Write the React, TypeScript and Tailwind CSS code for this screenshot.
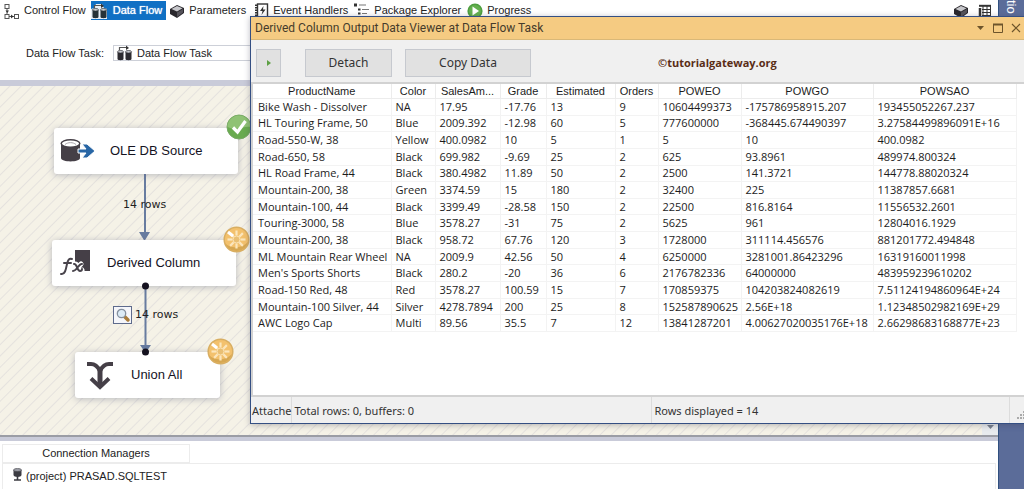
import type { ReactNode } from 'react';

type Row = string[];

const columns: { label: string; width: string }[] = [
  { label: 'ProductName', width: 'w-[138px]' },
  { label: 'Color', width: 'w-[44px]' },
  { label: 'SalesAm...', width: 'w-[65px]' },
  { label: 'Grade', width: 'w-[46px]' },
  { label: 'Estimated', width: 'w-[69px]' },
  { label: 'Orders', width: 'w-[43px]' },
  { label: 'POWEO', width: 'w-[83px]' },
  { label: 'POWGO', width: 'w-[132px]' },
  { label: 'POWSAO', width: 'w-[143px]' },
];

const rows: Row[] = [
  ['Bike Wash - Dissolver', 'NA', '17.95', '-17.76', '13', '9', '10604499373', '-175786958915.207', '193455052267.237'],
  ['HL Touring Frame, 50', 'Blue', '2009.392', '-12.98', '60', '5', '777600000', '-368445.674490397', '3.27584499896091E+16'],
  ['Road-550-W, 38', 'Yellow', '400.0982', '10', '5', '1', '5', '10', '400.0982'],
  ['Road-650, 58', 'Black', '699.982', '-9.69', '25', '2', '625', '93.8961', '489974.800324'],
  ['HL Road Frame, 44', 'Black', '380.4982', '11.89', '50', '2', '2500', '141.3721', '144778.88020324'],
  ['Mountain-200, 38', 'Green', '3374.59', '15', '180', '2', '32400', '225', '11387857.6681'],
  ['Mountain-100, 44', 'Black', '3399.49', '-28.58', '150', '2', '22500', '816.8164', '11556532.2601'],
  ['Touring-3000, 58', 'Blue', '3578.27', '-31', '75', '2', '5625', '961', '12804016.1929'],
  ['Mountain-200, 38', 'Black', '958.72', '67.76', '120', '3', '1728000', '311114.456576', '881201772.494848'],
  ['ML Mountain Rear Wheel', 'NA', '2009.9', '42.56', '50', '4', '6250000', '3281001.86423296', '16319160011998'],
  ["Men's Sports Shorts", 'Black', '280.2', '-20', '36', '6', '2176782336', '64000000', '483959239610202'],
  ['Road-150 Red, 48', 'Red', '3578.27', '100.59', '15', '7', '170859375', '104203824082619', '7.51124194860964E+24'],
  ['Mountain-100 Silver, 44', 'Silver', '4278.7894', '200', '25', '8', '152587890625', '2.56E+18', '1.12348502982169E+29'],
  ['AWC Logo Cap', 'Multi', '89.56', '35.5', '7', '12', '13841287201', '4.00627020035176E+18', '2.66298683168877E+23'],
];

function ControlFlowIcon() {
  return (
    <svg width="16" height="16" viewBox="0 0 16 16" fill="#fff" stroke="#555" strokeWidth="1">
      <path d="M3 5v6M5 13.500h6" fill="none" />
      <rect x="1" y="1.500" width="4" height="4" />
      <rect x="1" y="11.500" width="4" height="4" />
      <rect x="10.500" y="11.500" width="4" height="4" />
      <path d="M1.500 7.500h3.500l-1.700 2.500zM7 11.500v4l2.500-2z" fill="#333" stroke="none" />
    </svg>
  );
}

function DataFlowIcon({ light = false }: { light?: boolean }) {
  const body = light ? '#263238' : '#2d2b30';
  return (
    <svg width="17" height="16" viewBox="0 0 17 16">
      {light && <path d="M0 6l3-1 2-4h6l2 4 3 1v10H0z" fill="#e8eef5" />}
      <path d="M3.500 5V2.500h7" fill="none" stroke="#555" strokeWidth="1.200" />
      <path d="M10 .500L13 3l-3 2z" fill="#333" />
      <path d="M1.500 7v7c0 1.600 6 1.600 6 0V7z" fill={body} />
      <ellipse cx="4.500" cy="6.800" rx="3" ry="1.300" fill="#c9cbd0" stroke={body} strokeWidth=".7" />
      <path d="M9.500 7v7c0 1.600 6 1.600 6 0V7z" fill={body} />
      <ellipse cx="12.500" cy="6.800" rx="3" ry="1.300" fill="#c9cbd0" stroke={body} strokeWidth=".7" />
    </svg>
  );
}

function BoxIcon() {
  return (
    <svg width="16" height="16" viewBox="0 0 16 16">
      <path d="M1 6l7-4 7 3v5l-7 5-7-4z" fill="#29272c" />
      <path d="M2.500 6L8 3l5.500 2.300L8 8.500z" fill="#c7c7cb" />
      <path d="M8 9.500l6-3.500v3.500l-6 4.500z" fill="#55535a" />
    </svg>
  );
}

function EventIcon() {
  return (
    <svg width="14" height="15" viewBox="0 0 14 15">
      <rect x="2.500" y="1" width="10" height="13" fill="#fff" stroke="#333" strokeWidth="1.400" />
      <path d="M1 1.500v13" stroke="#333" strokeWidth="2" strokeDasharray="1.500 1" />
      <path d="M8.500 3L5 8h2.500L6.500 12 10.500 6.500H8z" fill="#333" />
    </svg>
  );
}

function ExplorerIcon() {
  return (
    <svg width="16" height="16" viewBox="0 0 16 16" fill="none" stroke="#333">
      <path d="M0 2h3" strokeWidth="3" />
      <path d="M5 2h7M8 6.500h7M8 10.500h5M8 14.500h7" strokeWidth="1.200" stroke="#777" />
      <path d="M4 6.500h2.500M4 10.500h2.500M4 14.500h2.500" strokeWidth="2" />
    </svg>
  );
}

function ProgressIcon() {
  return (
    <svg width="16" height="16" viewBox="0 0 16 16">
      <circle cx="8" cy="8" r="7.600" fill="#4f9f40" />
      <circle cx="8" cy="8" r="6" fill="#64b04f" />
      <path d="M5.500 3.500L12 8l-6.500 4.500z" fill="#fff" />
    </svg>
  );
}

function VariablesIcon() {
  return (
    <svg width="14" height="14" viewBox="0 0 14 14" fill="none" stroke="#333">
      <path d="M1 1.800h12" strokeWidth="2" />
      <path d="M4 5.500h9M4 8.500h9M4 11.500h8M5 2v11M9 2v11M12.500 2v10" />
      <path d="M2 4v9" strokeWidth="2.500" />
    </svg>
  );
}

function SourceIcon() {
  return (
    <svg width="36" height="24" viewBox="0 0 36 24">
      <path d="M1 4v15c0 4.500 19 4.500 19 0V4z" fill="#453f47" />
      <ellipse cx="10.500" cy="4.500" rx="9.300" ry="3.700" fill="#fff" stroke="#453f47" strokeWidth="1.500" />
      <path d="M5 5.500c3-2.500 8-2.500 11 0" fill="none" stroke="#aaa6ac" />
      <path d="M18 10h8l-4-5h5l8 7-8 7h-5l4-5h-8z" fill="#2866a5" stroke="#fff" strokeWidth="1" />
    </svg>
  );
}

function DerivedIcon() {
  return (
    <svg width="34" height="28" viewBox="0 0 34 28">
      <rect x="16" y="1" width="15" height="21" fill="#453f47" />
      <g fill="none" stroke="#fff" strokeWidth="5" strokeLinecap="round">
        <path d="M16 15c3-1 3 8 7 6M22 15l-7 7" />
      </g>
      <g fill="none" stroke="#49444c" strokeWidth="2" strokeLinecap="round">
        <path d="M2 25c4 1 5-5 6-10 1-4 2-6 5-5M5 14h7" />
        <path d="M15 15c3-1 3 7 6 7 1 0 2-1 2-2M23 15c-3-1-5 7-9 7" />
      </g>
    </svg>
  );
}

function UnionIcon() {
  return (
    <svg width="26" height="29" viewBox="0 0 26 29" fill="none" stroke="#453f47">
      <path d="M0 3h4c4 0 7 3 9 7 2-4 5-7 9-7h4" strokeWidth="4" />
      <path d="M13 8v17" strokeWidth="5" />
      <path d="M4 17.500l9 8.500 9-8.500" strokeWidth="4" />
    </svg>
  );
}

function CheckBadge() {
  return (
    <svg width="26" height="26" viewBox="0 0 26 26">
      <circle cx="13" cy="13" r="12" fill="#69ab4f" stroke="#78a966" />
      <path d="M1.500 13a11.500 11.500 0 0 1 23 0c-6-2-13 5-23 0z" fill="#8fc274" />
      <path d="M7 13.500l4.500 4.500 8-11" fill="none" stroke="#fff" strokeWidth="3.200" />
    </svg>
  );
}

const rayAngles = [0, 45, 90, 135, 180, 225, 270, 315];

function BusyBadge() {
  return (
    <svg width="27" height="27" viewBox="0 0 27 27">
      <circle cx="13.500" cy="13.500" r="12.300" fill="#f3c16d" stroke="#d8ae62" strokeWidth="1.500" />
      <path d="M2 17c5 6 17 6 23-1-2 6-6 9-11.500 9S4 22 2 17z" fill="#d6a752" />
      {rayAngles.map((a) => (
        <path key={a} d="M13.500 9.500V4.500" stroke="#fbe6bd" strokeWidth="2.200" transform={`rotate(${a} 13.500 13.500)`} />
      ))}
      <circle cx="13.500" cy="13.500" r="3.500" fill="#e9bf74" stroke="#fbe3b4" />
      <path d="M5 6l5 4" stroke="#fff" strokeWidth="3" />
    </svg>
  );
}

function ViewerIcon() {
  return (
    <svg width="19" height="18" viewBox="0 0 19 18">
      <rect x=".5" y=".5" width="18" height="17" fill="#f5f6fa" stroke="#5e6b8c" />
      <path d="M11.500 10.500l3.500 3.500" stroke="#a97c3a" strokeWidth="3.500" strokeLinecap="round" />
      <circle cx="8.500" cy="7.500" r="4.200" fill="#dcebf6" stroke="#85909e" strokeWidth="1.300" />
    </svg>
  );
}

function ConnectionIcon() {
  return (
    <svg width="9" height="13" viewBox="0 0 9 13">
      <path d="M.5 2v5c0 2.500 8 2.500 8 0V2z" fill="#3b3b42" />
      <ellipse cx="4.500" cy="2" rx="4" ry="1.600" fill="#999ba3" stroke="#3b3b42" strokeWidth=".6" />
      <path d="M4.500 8v4M1 12h7" stroke="#3b3b42" strokeWidth="1.600" />
    </svg>
  );
}

function Tab({ icon, label, active = false }: { icon: ReactNode; label: string; active?: boolean }) {
  return (
    <button
      className={
        active
          ? 'flex h-[19px] items-center gap-[5px] bg-[#1070c4] pr-1 text-white [text-shadow:0_0_1px_#fff]'
          : 'flex h-[19px] items-center gap-1 text-[#222]'
      }
    >
      {icon}
      {label}
    </button>
  );
}

function Node({ place, icon, label, badge }: { place: string; icon: ReactNode; label: string; badge: ReactNode }) {
  return (
    <div className={`absolute flex h-[46px] items-center gap-[14px] rounded-[3px] bg-white text-[13px] text-[#15131f] shadow-[0_1px_7px_rgba(90,95,125,0.4)] ${place}`}>
      {icon}
      {label}
      <span className="absolute -top-[14px] -right-[14px]">{badge}</span>
    </div>
  );
}

function Viewer() {
  return (
    <section className="absolute top-4 -right-[2px] left-[250px] flex h-[408px] flex-col border border-[#344f83] bg-[#f0f0f0] font-['Noto_Sans',sans-serif] shadow-[0_1px_6px_rgba(60,60,80,0.35)]">
      <header className="flex h-[23px] shrink-0 items-center justify-between border-b border-[#d9b878] bg-[#f5cb82] pr-1 pl-1">
        <h1 className="font-['Roboto',sans-serif] text-[12px] text-[#453b2b]">Derived Column Output Data Viewer at Data Flow Task</h1>
        <div className="flex items-center gap-2">
          <button aria-label="Window menu" className="flex h-4 w-[9px] items-center">
            <svg width="9" height="5" viewBox="0 0 9 5"><path d="M1 0h7L4.500 4z" fill="#6d542b" /></svg>
          </button>
          <button aria-label="Maximize">
            <svg width="10" height="10" viewBox="0 0 10 10"><path d="M.5 1v8.500h9V1" fill="none" stroke="#6d542b" /><path d="M0 1.500h10" stroke="#6d542b" strokeWidth="2" /></svg>
          </button>
          <button aria-label="Close">
            <svg width="10" height="10" viewBox="0 0 10 10"><path d="M1 1l8 8M9 1L1 9" stroke="#6d542b" strokeWidth="1.200" /></svg>
          </button>
        </div>
      </header>
      <div className="flex h-[42px] shrink-0 items-center pt-1 pl-[5px] text-[12px] text-[#333]">
        <button aria-label="Resume" className="flex h-7 w-[25px] items-center justify-center border border-[#c6c9cf] bg-[#e1e1e1]">
          <svg width="4" height="6" viewBox="0 0 4 6"><path d="M0 0l4 3-4 3z" fill="#5da044" /></svg>
        </button>
        <button className="ml-6 h-7 w-[87px] border border-[#c6c9cf] bg-[#e1e1e1]">Detach</button>
        <button className="ml-[13px] h-7 w-[126px] border border-[#c6c9cf] bg-[#e1e1e1]">Copy Data</button>
        <span className="ml-[127px] font-['Open_Sans',sans-serif] text-[11px] font-bold text-[#5a2d16]">©tutorialgateway.org</span>
      </div>
      <div className="flex-1 border-t-2 border-b-2 border-l-2 border-[#d2d2d2] bg-white">
        <table className="h-[248px] w-[763px] table-fixed border-collapse text-left font-['Open_Sans',sans-serif] text-[11px] leading-[14px] text-[#1c1c1c]">
          <thead>
            <tr>
              {columns.map((c) => (
                <th key={c.label} className={`border-r border-b border-[#ececec] p-0 text-center font-['Liberation_Sans',Arial,sans-serif] font-normal whitespace-nowrap ${c.width}`}>
                  {c.label}
                </th>
              ))}
            </tr>
          </thead>
          <tbody>
            {rows.map((r, i) => (
              <tr key={i}>
                {r.map((v, j) => (
                  <td key={j} className="border-r border-b border-[#f3f3f3] py-0 pr-0 pl-1 whitespace-nowrap first:pl-[5px]">
                    {v}
                  </td>
                ))}
              </tr>
            ))}
          </tbody>
        </table>
      </div>
      <footer className="flex h-[26px] shrink-0 items-stretch text-[11px] leading-[27px] text-[#333]">
        <span className="border-r border-[#dcdcdc] pl-px whitespace-nowrap">Attache</span>
        <span className="w-[360px] border-r border-[#dcdcdc] pl-[2px]">Total rows: 0, buffers: 0</span>
        <span className="flex-1 pl-[2px]">Rows displayed = 14</span>
        <span className="flex w-4 items-end justify-end border-l border-[#dcdcdc] pb-1">
          <svg width="8" height="8" viewBox="0 0 8 8" fill="#aaa"><path d="M6 0h2v2H6zM3 3h2v2H3zM6 3h2v2H6zM0 6h2v2H0zM3 6h2v2H3zM6 6h2v2H6z" /></svg>
        </span>
      </footer>
    </section>
  );
}

export default function App() {
  return (
    <div className="relative flex h-screen overflow-hidden bg-white font-['Liberation_Sans',Arial,sans-serif] text-[11px] text-[#222]">
      <main className="flex min-w-0 flex-1 flex-col">
        <nav className="flex h-5 shrink-0 items-center pt-px pl-1 whitespace-nowrap">
          <Tab icon={<ControlFlowIcon />} label="Control Flow" />
          <span className="w-[5px]" />
          <Tab icon={<DataFlowIcon light />} label="Data Flow" active />
          <span className="w-[3px]" />
          <Tab icon={<BoxIcon />} label="Parameters" />
          <span className="w-[9px]" />
          <Tab icon={<EventIcon />} label="Event Handlers" />
          <span className="w-[6px]" />
          <Tab icon={<ExplorerIcon />} label="Package Explorer" />
          <span className="w-[6px]" />
          <Tab icon={<ProgressIcon />} label="Progress" />
          <span className="ml-auto flex items-center gap-[9px] pr-[6px]">
            <button aria-label="Toolbox"><BoxIcon /></button>
            <button aria-label="Variables"><VariablesIcon /></button>
          </span>
        </nav>
        <div className="flex h-[60px] shrink-0 items-center pt-[8px] pb-[2px] pl-[26px]">
          <label htmlFor="task" className="w-[87px]">Data Flow Task:</label>
          <div className="flex h-4 flex-1 items-center border border-[#cdd0d8] pl-[2px]">
            <DataFlowIcon />
            <select id="task" className="flex-1 appearance-none bg-transparent pl-1">
              <option>Data Flow Task</option>
            </select>
          </div>
        </div>
        <div className="h-[6px] shrink-0 bg-[#c9cbd9]" />
        <div className="relative flex-1 bg-[#f5f2e7] bg-[repeating-linear-gradient(135deg,transparent_0_6px,#e5e2de_7px,transparent_8px)]">
          <svg className="absolute top-0 left-0" width="250" height="349" viewBox="0 86 250 349">
            <path d="M145 173v62M145.500 286v62" stroke="#687ca0" strokeWidth="2" />
            <path d="M139 232h11l-5.500 9zM140 345h11l-5.500 8z" fill="#687ca0" />
          </svg>
          <Node place="top-[42px] left-[54px] w-[184px] pl-[6px]" icon={<SourceIcon />} label="OLE DB Source" badge={<CheckBadge />} />
          <Node place="top-[154px] left-[52px] w-[184px] pl-[7px]" icon={<DerivedIcon />} label="Derived Column" badge={<BusyBadge />} />
          <Node place="top-[266px] left-[75px] w-[145px] gap-[18px] pl-3" icon={<UnionIcon />} label="Union All" badge={<BusyBadge />} />
          <svg className="absolute top-[196px] left-[142px]" width="8" height="74" viewBox="0 0 8 74" fill="#14111f">
            <circle cx="3.500" cy="4" r="3.500" />
            <circle cx="3.500" cy="70" r="3.500" />
          </svg>
          <span className="absolute top-[111px] left-[123px] font-['DejaVu_Sans',sans-serif] leading-4">14 rows</span>
          <span className="absolute top-[220px] left-[113px] flex items-center gap-[3px] font-['DejaVu_Sans',sans-serif] leading-4">
            <button aria-label="Data viewer"><ViewerIcon /></button>
            14 rows
          </span>
          <button aria-label="Scroll down" className="absolute right-0 bottom-0 flex h-4 w-4 items-center justify-center bg-[#e8ebee]">
            <svg width="7" height="5" viewBox="0 0 7 5"><path d="M0 0h7L3.500 4z" fill="#777f8d" /></svg>
          </button>
        </div>
        <div className="h-[6px] shrink-0 border-t-2 border-[#9b9da5] bg-[#c9cbd9]" />
        <section className="flex h-12 shrink-0 flex-col pt-[3px] pl-[2px]">
          <h2 className="flex h-[19px] w-[188px] items-center justify-center border border-[#ececec]">Connection Managers</h2>
          <div className="mr-[2px] flex flex-1 items-start gap-1 border-t border-r border-l border-[#ececec] pt-[4px] pl-[10px]">
            <ConnectionIcon />
            <span className="leading-4">(project) PRASAD.SQLTEST</span>
          </div>
        </section>
      </main>
      <aside className="flex w-[26px] shrink-0 justify-center border-l border-[#30507f] bg-[#5b6c99] text-[13px] text-white">
        <span className="[writing-mode:vertical-rl]">tio</span>
      </aside>
      <Viewer />
    </div>
  );
}
